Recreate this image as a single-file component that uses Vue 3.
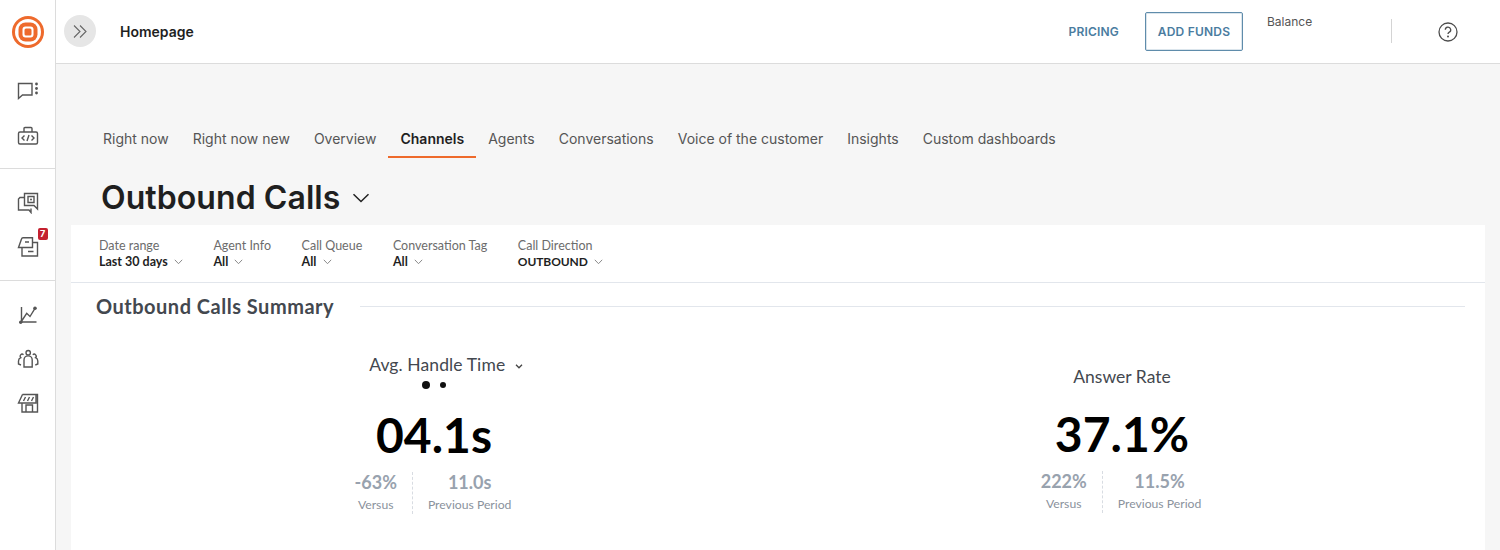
<template>
  <div class="app">
    <aside class="sidebar">
      <div class="logo-slot">
        <svg width="32" height="32" viewBox="0 0 32 32">
          <circle cx="16" cy="16" r="16" fill="#ee6a2c" />
          <circle cx="16" cy="16" r="13" fill="#fff" />
          <rect x="6.500" y="6.500" width="19" height="19" rx="7" fill="#ee6a2c" />
          <rect x="10.500" y="10.500" width="11" height="11" rx="3" fill="#fff" />
          <rect x="12.500" y="12.500" width="7" height="7" rx="1.500" fill="#ee6a2c" />
        </svg>
      </div>
      <div class="nav-group first">
        <svg class="nav-icon" viewBox="0 0 24 24">
          <path d="M2.500 5.500H16V17H6.500l-4 3.500z" />
          <circle class="dot" cx="20.500" cy="6" r="1.400" /><circle class="dot" cx="20.500" cy="10.500" r="1.400" /><circle class="dot" cx="20.500" cy="15" r="1.400" />
        </svg>
        <svg class="nav-icon" viewBox="0 0 24 24">
          <rect x="2.500" y="8" width="19" height="12" rx="1.500" />
          <path d="M8 8V4.500q0-1 1-1h6q1 0 1 1V8M8.500 11.500 6 14l2.500 2.500M15.500 11.500 18 14l-2.500 2.500M13 11l-2 6" />
        </svg>
      </div>
      <div class="nav-group">
        <svg class="nav-icon" viewBox="0 0 24 24">
          <path d="M8.500 7.500H4L2.500 9v11H13l2 2.500V18.500" />
          <path d="M8.500 3.500h13V19L18 15.500H8.500z" />
          <path d="M12 6.500h6v6h-6z" />
          <circle class="dot" cx="15" cy="9.500" r="1" />
        </svg>
        <div class="badge-wrap">
          <svg class="nav-icon" viewBox="0 0 24 24">
            <path d="M2.500 13.500 5.500 5q.3-1.200 1.500-1.200h9.500v9.700zM16.500 8.500h5V22H6v-8.500M12 17.500h5.500M9 8h4" />
          </svg>
          <span class="badge">7</span>
        </div>
      </div>
      <div class="nav-group last">
        <svg class="nav-icon" viewBox="0 0 24 24">
          <path d="M5.500 4v16M4.500 19h16M5 19l5.700-8.700 3.300 3.200 5-8.200" />
          <circle class="dot" cx="4.700" cy="19.300" r="1.700" /><circle class="dot" cx="19" cy="5.300" r="1.800" />
        </svg>
        <svg class="nav-icon" viewBox="0 0 24 24">
          <circle cx="12.200" cy="5.700" r="2.200" />
          <path d="M8 20v-7a4.100 4.100 0 0 1 8.200 0v7zM7.500 7.700a2 2 0 0 0-2.700 3C3.200 11.300 2.500 12.500 2.500 14v3l2.500 1M16.800 7.700a2 2 0 0 1 2.700 3c1.600.6 2.300 1.800 2.300 3.300v3l-2.500 1" />
        </svg>
        <svg class="nav-icon" viewBox="0 0 24 24">
          <path d="M6.500 3.500h15V21H6v-9M6.500 3.500 2.500 12H20V4M10 21v-7h6.500v7M9.500 6l-2 4M13.500 6l-2 4M17.500 6l-2 4" />
        </svg>
      </div>
    </aside>

    <div class="content">
      <header class="topbar">
        <div class="topbar-left">
          <button class="expand">
            <svg width="14" height="13" viewBox="0 0 14 13"><path d="M1 .5 7 6.500 1 12.500M7 .5l6 6-6 6" /></svg>
          </button>
          <span class="page-name">Homepage</span>
        </div>
        <div class="topbar-right">
          <a class="pricing">PRICING</a>
          <a class="add-funds">ADD FUNDS</a>
          <span class="balance">Balance</span>
          <span class="vline"></span>
          <svg class="help" width="20" height="20" viewBox="0 0 20 20">
            <circle cx="10" cy="10" r="9" />
            <path d="M7.300 7.800A2.700 2.700 0 1 1 11 10.300c-.8.400-1 .9-1 1.700" />
            <circle class="help-dot" cx="10" cy="14.600" r="1" />
          </svg>
        </div>
      </header>

      <main class="main">
        <nav class="tabs">
          <a v-for="t in tabs" :key="t" class="tab" :class="{ active: t === 'Channels' }">{{ t }}</a>
        </nav>
        <div class="title-row">
          <h1>Outbound Calls</h1>
          <svg width="18" height="10" viewBox="0 0 18 10"><path d="M1.500 1.200 9 8.500l7.500-7.300" /></svg>
        </div>

        <section class="panel">
          <div class="filters">
            <div v-for="f in filters" :key="f.label" class="filter">
              <span class="filter-label">{{ f.label }}</span>
              <span class="filter-value" :class="{ caps: f.caps }">
                {{ f.value }}
                <svg width="9" height="6" viewBox="0 0 9 6"><path d="M.8.800 4.500 4.700 8.200.8" /></svg>
              </span>
            </div>
          </div>
          <div class="summary-head">
            <h2>Outbound Calls Summary</h2>
            <span class="rule"></span>
          </div>
          <div class="stats">
            <div v-for="s in stats" :key="s.title" class="stat" :class="{ paged: s.paged }">
              <div class="stat-title">
                {{ s.title }}
                <svg v-if="s.paged" width="8" height="5" viewBox="0 0 8 5"><path d="M1 .8 4 3.800 7 .8" /></svg>
              </div>
              <div v-if="s.paged" class="pager"><i class="big"></i><i></i></div>
              <div class="stat-value">{{ s.value }}</div>
              <div class="compare">
                <div class="cell">
                  <b>{{ s.versus }}</b>
                  <span>Versus</span>
                </div>
                <div class="cell">
                  <b>{{ s.previous }}</b>
                  <span>Previous Period</span>
                </div>
              </div>
            </div>
          </div>
        </section>
      </main>
    </div>
  </div>
</template>

<script setup>
const tabs = [
  'Right now',
  'Right now new',
  'Overview',
  'Channels',
  'Agents',
  'Conversations',
  'Voice of the customer',
  'Insights',
  'Custom dashboards'
];

const filters = [
  { label: 'Date range', value: 'Last 30 days' },
  { label: 'Agent Info', value: 'All' },
  { label: 'Call Queue', value: 'All' },
  { label: 'Conversation Tag', value: 'All' },
  { label: 'Call Direction', value: 'OUTBOUND', caps: true }
];

const stats = [
  { title: 'Avg. Handle Time', value: '04.1s', versus: '-63%', previous: '11.0s', paged: true },
  { title: 'Answer Rate', value: '37.1%', versus: '222%', previous: '11.5%', paged: false }
];
</script>

<style>
html,
body {
  margin: 0;
  overflow: hidden;
}
</style>

<style scoped>
.app {
  display: flex;
  width: 1500px;
  height: 550px;
  overflow: hidden;
  font-family: Inter, "Liberation Sans", sans-serif;
  background: #f6f6f6;
}

.sidebar {
  flex: 0 0 56px;
  box-sizing: border-box;
  background: #fff;
  border-right: 1px solid #dcdcdc;
}

.logo-slot {
  height: 64px;
  display: flex;
  align-items: center;
  justify-content: center;
  box-sizing: border-box;
}

.nav-group {
  display: flex;
  flex-direction: column;
  align-items: center;
  gap: 20px;
  padding: 21px 0 22px;
  border-top: 1px solid #dcdcdc;
}

.nav-group.first {
  border-top: none;
  gap: 22px;
  padding: 14px 0 20px;
}

.nav-group.last {
  padding-top: 22px;
}

.nav-icon {
  display: block;
  width: 24px;
  height: 24px;
  fill: none;
  stroke: #555;
  stroke-width: 1.4;
}

.nav-icon .dot {
  fill: #555;
  stroke: none;
}

.badge-wrap {
  position: relative;
}

.badge {
  position: absolute;
  top: -6px;
  left: 22px;
  width: 10px;
  height: 12px;
  border-radius: 2px;
  background: #c4202f;
  color: #fff;
  font-size: 9px;
  line-height: 12px;
  font-weight: 700;
  text-align: center;
}

.content {
  flex: 1;
  min-width: 0;
}

.topbar {
  height: 64px;
  box-sizing: border-box;
  display: flex;
  justify-content: space-between;
  background: #fff;
  border-bottom: 1px solid #dcdcdc;
}

.topbar-left {
  display: flex;
  align-items: center;
  padding: 0 0 1px 8px;
}

.expand {
  width: 32px;
  height: 32px;
  padding: 0;
  display: flex;
  align-items: center;
  justify-content: center;
  border: none;
  border-radius: 50%;
  background: #e6e6e6;
}

.expand svg {
  fill: none;
  stroke: #666;
  stroke-width: 1.1;
}

.page-name {
  margin-left: 24px;
  font-size: 14px;
  font-weight: 600;
  color: #1f1f1f;
}

.topbar-right {
  display: flex;
  align-items: center;
  padding: 0 42px 1px 0;
}

.pricing,
.add-funds {
  font-size: 12px;
  font-weight: 600;
  letter-spacing: 0.2px;
  color: #4a7c9f;
}

.pricing {
  margin-left: 1px;
}

.add-funds {
  margin: 1px 0 0 26px;
  width: 98px;
  height: 39px;
  box-sizing: border-box;
  display: flex;
  align-items: center;
  justify-content: center;
  border: 1px solid #5f8cab;
  border-radius: 2px;
  box-shadow: inset 0 0 0 1px rgba(74, 124, 159, 0.2);
}

.balance {
  align-self: flex-start;
  margin: 14px 0 0 24px;
  width: 124px;
  font-size: 12px;
  line-height: 15px;
  color: #555;
}

.vline {
  width: 1px;
  height: 24px;
  background: #d4d4d4;
}

.help {
  margin: 2px 0 0 46px;
  fill: none;
  stroke: #4d4d4d;
  stroke-width: 1.3;
}

.help .help-dot {
  fill: #4d4d4d;
  stroke: none;
}

.main {
  height: 486px;
  padding-top: 59px;
  box-sizing: border-box;
}

.tabs {
  display: flex;
  margin-left: 35px;
}

.tab {
  padding: 0 12px;
  height: 35px;
  box-sizing: border-box;
  line-height: 32px;
  font-size: 14px;
  color: #555;
  border-bottom: 2px solid transparent;
}

.tab.active {
  font-weight: 600;
  color: #1f1f1f;
  border-bottom-color: #ee6a2c;
}

.title-row {
  display: flex;
  align-items: center;
  gap: 12px;
  margin: 20px 0 0 45px;
  height: 40px;
}

.title-row svg {
  fill: none;
  stroke: #222;
  stroke-width: 1.5;
}

h1 {
  margin: 0;
  font-size: 32px;
  line-height: 40px;
  font-weight: 600;
  letter-spacing: 0.07px;
  color: #1f1f1f;
}

.panel {
  margin: 7px 15px 0;
  height: 340px;
  background: #fff;
  font-family: Lato, "Open Sans", sans-serif;
}

.filters {
  display: flex;
  gap: 30.6px;
  height: 58px;
  box-sizing: border-box;
  padding: 13px 0 0 28px;
  border-bottom: 1px solid #e2e6ec;
}

.filter {
  display: flex;
  flex-direction: column;
}

.filter-label {
  font-size: 12.5px;
  line-height: 15px;
  color: #6c6c6c;
}

.filter-value {
  margin-top: 1px;
  font-size: 12.5px;
  line-height: 15px;
  font-weight: 700;
  color: #1f1f1f;
}

.filter-value.caps {
  font-size: 12px;
  letter-spacing: -0.1px;
}

.filter-value svg {
  margin-left: 3px;
  vertical-align: 1px;
  fill: none;
  stroke: #8a8a8a;
}

.summary-head {
  display: flex;
  align-items: center;
  gap: 26px;
  margin: 10px 20px 0 25px;
  height: 26px;
}

h2 {
  margin: 0;
  font-size: 20px;
  font-weight: 700;
  letter-spacing: 0.5px;
  color: #43484f;
}

.rule {
  flex: 1;
  height: 1px;
  background: #e2e6ec;
}

.stats {
  display: grid;
  grid-template-columns: 688px 688px;
  margin: 19px 0 0 19px;
}

.stat {
  display: flex;
  flex-direction: column;
  align-items: center;
  box-sizing: border-box;
  padding-top: 28px;
}

.stat.paged {
  padding-top: 16px;
}

.stat-title {
  font-size: 17.5px;
  line-height: 22px;
  color: #43484f;
}

.stat.paged .stat-title {
  margin-left: 24px;
  letter-spacing: 0.1px;
}

.stat.paged .stat-title svg {
  margin-left: 5px;
  vertical-align: 2px;
  fill: none;
  stroke: #444;
  stroke-width: 1.3;
}

.pager {
  display: flex;
  align-items: center;
  gap: 10px;
  height: 10px;
  margin: 4px 0 -1px;
}

.pager i {
  width: 6px;
  height: 6px;
  border-radius: 50%;
  background: #111;
}

.pager i.big {
  width: 8px;
  height: 8px;
}

.stat-value {
  margin-top: 17px;
  font-size: 48px;
  line-height: 58px;
  font-weight: 700;
  color: #000;
}

.compare {
  display: flex;
  margin: 8px 2px 0 0;
}

.cell {
  display: flex;
  flex-direction: column;
  align-items: center;
  padding: 0 16px;
}

.cell:first-child {
  padding-right: 15px;
}

.cell + .cell {
  padding-left: 15px;
  border-left: 1px dashed #d8dce2;
}

.cell b {
  font-size: 18px;
  line-height: 20px;
  font-weight: 700;
  color: #98a2ae;
}

.cell span {
  margin-top: 4px;
  font-size: 12.2px;
  line-height: 18px;
  color: #8a929c;
}
</style>
